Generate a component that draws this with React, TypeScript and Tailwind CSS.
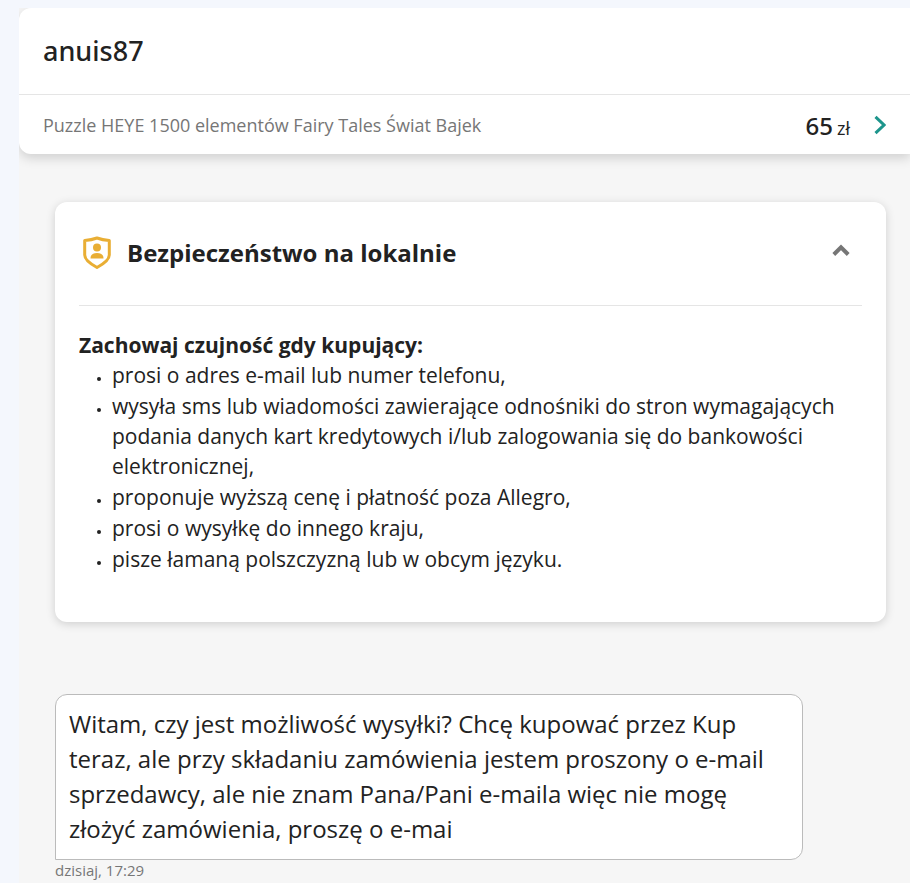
const warnings = [
  'prosi o adres e-mail lub numer telefonu,',
  'wysyła sms lub wiadomości zawierające odnośniki do stron wymagających podania danych kart kredytowych i/lub zalogowania się do bankowości elektronicznej,',
  'proponuje wyższą cenę i płatność poza Allegro,',
  'prosi o wysyłkę do innego kraju,',
  'pisze łamaną polszczyzną lub w obcym języku.',
];

function ShieldIcon() {
  return (
    <svg className="h-[34px] w-7" viewBox="0 0 28 34" fill="none" aria-hidden="true">
      <path
        d="M14 2C10 3.500 6 4.200 1.700 4.500V19c0 4.500 5 8.500 12.300 12.500 7.300-4 12.300-8 12.300-12.500V4.500C22 4.200 18 3.500 14 2Z"
        stroke="#e9ae34"
        strokeWidth="3"
        strokeLinejoin="round"
      />
      <circle cx="14" cy="11.500" r="4" fill="#e9ae34" />
      <path d="M7.500 22.500c0-4 2.500-5.500 6.500-5.500s6.500 1.500 6.500 5.500Z" fill="#e9ae34" />
    </svg>
  );
}

function Header() {
  return (
    <header className="rounded-l-xl bg-white shadow-[0_4px_12px_rgba(0,0,0,0.16)]">
      <h1 className="border-b border-[#e5e5e5] px-6 py-6 font-['Noto_Sans',sans-serif] text-[27px] leading-[38px] font-medium">
        anuis87
      </h1>
      <a href="#oferta" className="flex h-[59px] items-center px-6">
        <span className="flex-1 text-lg text-[#767676]">Puzzle HEYE 1500 elementów Fairy Tales Świat Bajek</span>
        <span className="flex items-baseline gap-1 pt-0.5 font-['Noto_Sans',sans-serif] text-2xl font-medium">
          65 <span className="font-['Open_Sans',sans-serif] text-lg font-normal">zł</span>
        </span>
        <svg className="ml-6 h-5 w-3" viewBox="0 0 12 20" fill="none" aria-hidden="true">
          <path d="m1.500 1.800 8.500 8.200-8.500 8.200" stroke="#1d958c" strokeWidth="3" />
        </svg>
      </a>
    </header>
  );
}

function SafetyCard() {
  return (
    <section className="mt-12 mr-6 ml-9 rounded-xl bg-white px-6 pb-12 shadow-[0_2px_10px_rgba(0,0,0,0.16)]">
      <div className="flex h-[104px] items-center border-b border-[#e5e5e5] px-1 pb-px">
        <ShieldIcon />
        <h2 className="ml-4 flex-1 text-2xl font-bold">Bezpieczeństwo na lokalnie</h2>
        <button type="button" aria-label="Zwiń" className="px-2 pb-1.5">
          <svg className="h-3 w-[18px]" viewBox="0 0 18 12" fill="none">
            <path d="m1.800 10.500 7.200-7.200 7.200 7.200" stroke="#767676" strokeWidth="4" />
          </svg>
        </button>
      </div>
      <h3 className="mt-6 text-[21px] leading-[30px] font-bold">Zachowaj czujność gdy kupujący:</h3>
      <ul className="flex list-disc flex-col gap-px pl-[33px] text-[21px] leading-[30px] marker:text-xs">
        {warnings.map((warning) => (
          <li key={warning}>{warning}</li>
        ))}
      </ul>
    </section>
  );
}

export default function App() {
  return (
    <main className="min-h-screen bg-[#f4f7fd] pt-2 pl-[19px] font-['Open_Sans',sans-serif] text-[#222222]">
      <div className="min-h-[calc(100vh-8px)] overflow-hidden bg-[#f6f6f6]">
        <Header />
        <SafetyCard />
        <div className="mt-[72px] mr-[107px] ml-9">
          <p className="rounded-xl rounded-bl-none border border-[#bbbbbb] bg-white px-[13px] pt-[11px] pb-[13px] text-2xl leading-[35px]">
            Witam, czy jest możliwość wysyłki? Chcę kupować przez Kup teraz, ale przy składaniu zamówienia jestem
            proszony o e-mail sprzedawcy, ale nie znam Pana/Pani e-maila więc nie mogę złożyć zamówienia, proszę o e-mai
          </p>
          <time className="block text-[15px] leading-5 text-[#767676]">dzisiaj, 17:29</time>
        </div>
      </div>
    </main>
  );
}
